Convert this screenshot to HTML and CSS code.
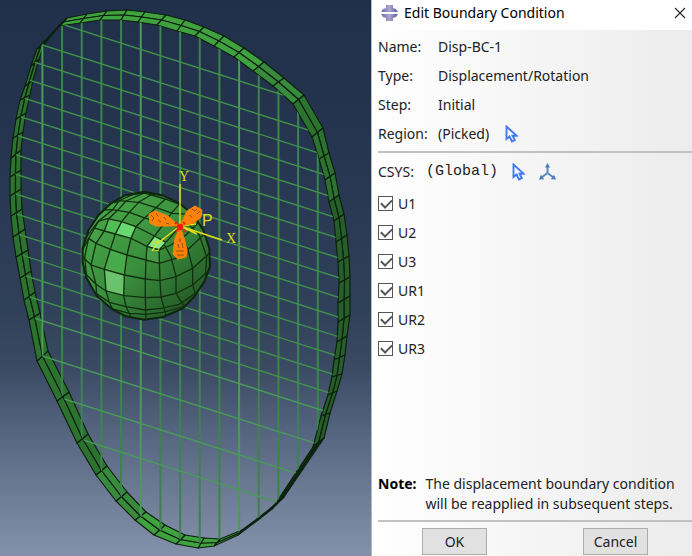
FILE: index.html
```html
<!DOCTYPE html>
<html lang="en">
<head>
<meta charset="utf-8">
<title>Edit Boundary Condition</title>
<link rel="stylesheet" href="styles.css">
</head>
<body>
<main class="workspace">
  <section class="viewport" aria-label="Model viewport">
    <svg class="model" viewBox="0 0 371 556" preserveAspectRatio="xMidYMid slice">
      <defs>
        <linearGradient id="ball" x1="0.2" y1="0.1" x2="0.9" y2="0.85">
          <stop offset="0" stop-color="#46a548"/>
          <stop offset="0.5" stop-color="#3a8e3c"/>
          <stop offset="1" stop-color="#235a26"/>
        </linearGradient>
        <clipPath id="inside"><polygon id="inside-shape"/></clipPath>
      </defs>
      <g id="ring"></g>
      <g id="wires" clip-path="url(#inside)"></g>
      <g transform="translate(76 185) scale(0.3333)">
        <path d="M205 20L262 32L310 55L350 88L382 135L400 190L402 245L385 290L355 335L320 370L262 396L205 404L150 394L110 374L62 332L32 280L20 232L20 190L38 135L68 90L105 55L150 30Z" fill="url(#ball)" stroke="#0d240f" stroke-width="6"/>
        <path d="M137 110L180 125L165 160L118 147Z" fill="#6ad870"/>
        <path d="M95 103L137 110L118 147L85 138Z" fill="#52bd57"/>
        <path d="M238 152L272 174L250 192L213 183Z" fill="#86e88c"/>
        <path d="M213 185L249 195L250 235L210 225Z" fill="#489b4b"/>
        <path d="M85 253L145 270L143 332L90 318Z" fill="#68c36c"/>
        <path d="M103 193L153 210L145 270L85 253Z" fill="#48ab4b"/>
        <g class="mesh">
          <path d="M25 165L52 128L85 138L118 147L165 160L213 184L250 195L285 180L330 150L365 115"/>
          <path d="M20 195L38 160L60 175L103 193L153 210L210 225L250 235L300 220L340 190L382 150"/>
          <path d="M20 215L45 240L85 253L145 270L208 282L252 287L300 275L350 250L400 205"/>
          <path d="M32 270L60 298L90 318L145 332L208 338L255 336L300 325L350 300L393 262"/>
          <path d="M60 325L100 352L150 365L208 375L255 370L310 358L358 325"/>
          <path d="M110 372L160 385L210 388L260 382L325 364"/>
          <path d="M52 128L68 108L95 101L137 110L180 125L230 150L270 172"/>
          <path d="M85 75L110 74L160 82L210 100L262 118L310 125"/>
          <path d="M115 54L130 47L190 52L240 68L290 85L345 88"/>
          <path d="M150 32L205 24L268 42L315 60"/>
          <path d="M32 275L26 215L38 160L68 108L110 74L130 47L180 24"/>
          <path d="M62 330L60 298L45 240L60 175L85 138L98 101L125 76L150 48L205 24"/>
          <path d="M110 372L100 352L90 318L85 253L103 193L118 147L137 110L160 82L190 50L230 27"/>
          <path d="M165 396L150 365L143 332L145 270L153 210L165 160L180 125L210 95L240 68L268 42"/>
          <path d="M210 402L208 338L208 282L210 225L213 184L238 150L262 118L290 80L310 58"/>
          <path d="M270 392L255 336L252 287L249 195L270 172L310 125L345 90"/>
          <path d="M325 365L300 325L300 275L285 215L265 180"/>
          <path d="M358 328L350 298L350 250L335 190L300 145"/>
          <path d="M388 280L392 215L370 150L325 105"/>
        </g>
      </g>
      <g class="axes">
        <path d="M180 226V184M180 226L222 240M180 226L158 243M180 226l17 8M180 226l15-9M180 226l16-2"/>
      </g>
      <g class="support">
        <path d="M179 226L168 216L155 211L149 214L150 223L156 226Z"/>
        <path d="M180 226L187 211L195 206L202 210L201 217L194 223Z"/>
        <path d="M180 227L175 238L173 254L178 259L186 257L187 250L184 238Z"/>
      </g>
      <g class="holes">
        <path d="M151 215l3 3-2 3M156 213l2 3M158 220l3 2M164 217l2 3M166 223l3 1M192 209l3 2 2-2M197 214l3-3M190 215l2 3M176 251h8M177 255h7M178 244l1 4M182 243l1 5M180 238v4"/>
      </g>
      <circle cx="180" cy="227" r="3.3" fill="#f51b13"/>
      <path d="M175 224l2-2M183 222l2 2M176 231l2-1M184 230l2 2" stroke="#f51b13" stroke-width="2"/>
      <path d="M165 238L156 244" class="axes"/>
      <g class="axis-names">
        <text x="179" y="181">Y</text>
        <text x="226" y="243">X</text>
        <text x="151" y="251">Z</text>
        <text class="point-name" x="202" y="226">P</text>
      </g>
    </svg>
  </section>

  <form class="dialog">
    <header class="titlebar">
      <svg class="logo" width="17" height="18" viewBox="0 0 17 18">
        <defs><linearGradient id="metal"><stop offset="0" stop-color="#6f6bab"/><stop offset="0.5" stop-color="#a9a6cf"/><stop offset="1" stop-color="#5d5998"/></linearGradient></defs>
        <path d="M5 1H12V4L15 5L17 8H0L2 5L5 4ZM0 10H17L15 13L12 14V17H5V14L2 13Z" fill="url(#metal)"/>
      </svg>
      <h1>Edit Boundary Condition</h1>
      <button class="close" type="button" aria-label="Close">
        <svg width="12" height="12" viewBox="0 0 12 12"><path d="M1 1L11 11M11 1L1 11" fill="none" stroke="#222" stroke-width="1.1"/></svg>
      </button>
    </header>

    <div class="content">
      <dl class="facts">
        <dt>Name:</dt><dd>Disp-BC-1</dd>
        <dt>Type:</dt><dd>Displacement/Rotation</dd>
        <dt>Step:</dt><dd>Initial</dd>
        <dt>Region:</dt>
        <dd>(Picked)
          <button class="tool" type="button" aria-label="Edit region">
            <svg width="13" height="18" viewBox="0 0 13 18"><path d="M1.5 1.5V14L4.5 11.5L7 16.5L9.8 15L7.6 10.8H11.7Z" fill="#f4f8ff" stroke="#4179f5" stroke-width="1.9"/></svg>
          </button>
        </dd>
      </dl>
      <hr>
      <div class="csys">
        <span>CSYS:</span>
        <span class="system">(Global)</span>
        <button class="tool" type="button" aria-label="Edit coordinate system">
          <svg width="13" height="18" viewBox="0 0 13 18"><path d="M1.5 1.5V14L4.5 11.5L7 16.5L9.8 15L7.6 10.8H11.7Z" fill="#f4f8ff" stroke="#4179f5" stroke-width="1.9"/></svg>
        </button>
        <button class="tool" type="button" aria-label="Create coordinate system">
          <svg width="17" height="18" viewBox="0 0 17 18"><path d="M8.5 3V10L2.5 14.5M8.5 10L14.5 14.5" fill="none" stroke="#5c8cc4" stroke-width="2"/><path d="M8.5 0L11 4.5H6ZM0 16.5L2 11.8L5.2 16.2ZM17 16.5L15 11.8L11.8 16.2Z" fill="#4a7dbb"/></svg>
        </button>
      </div>
      <div class="freedoms">
        <label><input type="checkbox" checked>U1</label>
        <label><input type="checkbox" checked>U2</label>
        <label><input type="checkbox" checked>U3</label>
        <label><input type="checkbox" checked>UR1</label>
        <label><input type="checkbox" checked>UR2</label>
        <label><input type="checkbox" checked>UR3</label>
      </div>
      <div class="note">
        <strong>Note:</strong>
        <p>The displacement boundary condition<br>will be reapplied in subsequent steps.</p>
      </div>
      <hr>
      <footer class="actions">
        <button type="button">OK</button>
        <button type="button">Cancel</button>
      </footer>
    </div>
  </form>
</main>
<script src="model.js"></script>
</body>
</html>
```
FILE: styles.css
```css
* { box-sizing: border-box; }

body {
  margin: 0;
  color: #222;
  font: 14px/20px "Noto Sans", "Open Sans", sans-serif;
}

.workspace {
  display: grid;
  grid-template-columns: minmax(0, 371fr) minmax(0, 321fr);
  min-height: 100vh;
}

.viewport {
  position: relative;
  background: linear-gradient(#20304a 0%, #25354f 25%, #2f4059 55%, #3b4a63 66%, #5b6a84 80%, #8491aa 100%);
}

.model {
  position: absolute;
  width: 100%;
  height: 100%;
}

.model text {
  fill: #dede1c;
  font: 14px "Liberation Serif", serif;
}

.model .point-name { font: 16px "Liberation Sans", sans-serif; }

.mesh { fill: none; stroke: #12300f; stroke-width: 4; }
.axes { fill: none; stroke: #dede1c; stroke-width: 1.5; }
.support { fill: #ff8208; stroke: #ff8208; stroke-linejoin: round; }
.holes { fill: none; stroke: #914f10; stroke-width: 1; }
.ring-cell { stroke: #0c200e; stroke-width: 1.2; stroke-linejoin: round; }
.wire-column { stroke: #3c844c; stroke-width: 2; }
.wire-row { stroke: #3f914b; stroke-width: 1.4; }
.wire-low { stroke: #489b58; }

.dialog {
  display: flex;
  flex-direction: column;
  border-left: 1px solid #b5b8bf;
  background: linear-gradient(90deg, #fff 0%, #f6f6f6 45%, #ececec 100%);
}

.titlebar {
  display: flex;
  align-items: center;
  gap: 6px;
  height: 30px;
  padding: 0 6px 4px 9px;
  background: #fff;
  color: #000;
}

h1 { margin: 0; font-size: 14px; font-weight: 400; }

.close, .tool {
  display: flex;
  padding: 0;
  border: 0;
  background: none;
}

.close { margin-left: auto; }

.content {
  display: flex;
  flex: 1;
  flex-direction: column;
  padding: 2px 0 1px 6px;
}

.facts {
  display: grid;
  grid-template-columns: 60px 1fr;
  grid-auto-rows: 29px;
  align-items: center;
  margin: 0;
}

dd { display: flex; align-items: center; gap: 16px; margin: 0; }

hr {
  width: 100%;
  height: 2px;
  margin: 3px 0 2px;
  border: 0;
  background: #c0c2c2;
}

.csys {
  display: flex;
  align-items: center;
  gap: 14px;
  height: 34px;
}

.system { margin-left: -2px; font: 15px/20px "Liberation Mono", monospace; }

.freedoms { display: grid; grid-auto-rows: 29px; }

.freedoms label { display: flex; align-items: center; gap: 5px; }

input {
  width: 15px;
  height: 15px;
  margin: 0;
  border: 1px solid #555;
  background: #fff;
  appearance: none;
}

input:checked::after {
  display: block;
  width: 9px;
  height: 5px;
  margin: 2px;
  border: solid #555;
  border-width: 0 0 2px 2px;
  transform: rotate(-45deg);
  content: "";
}

.note {
  display: flex;
  gap: 9px;
  margin-top: auto;
  padding-bottom: 3px;
}

strong { color: #000; }
.note p { margin: 0; }

.actions {
  display: flex;
  justify-content: space-between;
  padding: 4px 44px 0 44px;
}

.actions button {
  width: 65px;
  height: 27px;
  padding: 0;
  border: 1px solid #adadad;
  background: #e1e1e1;
  color: #222;
  font: inherit;
}
```
FILE: model.js
```js
// Ring stations, clockwise from the upper left: outer x, outer y, inner x, inner y, cell colour.
const green = { top: '#3fa23f', mid: '#388b3c', side: '#2c732f', dark: '#265f29', thin: '#122e14' };
const stations = [
  [67, 18, 60, 26, 'top'], [87, 14, 80, 23, 'top'], [107, 11, 100, 20, 'top'], [127, 10, 121, 20, 'top'],
  [145, 12, 138, 22, 'top'], [166, 15, 157, 25, 'top'], [185, 20, 177, 31, 'top'], [204, 27, 195, 36, 'top'],
  [224, 36, 214, 46, 'top'], [244, 48, 234, 57, 'top'], [264, 62, 253, 71, 'mid'], [284, 78, 273, 86, 'mid'],
  [304, 95, 293, 104, 'side'], [323, 128, 312, 137, 'side'], [329, 153, 319, 159, 'side'], [335, 173, 325, 180, 'side'],
  [339, 195, 329, 202, 'dark'], [344, 214, 334, 221, 'dark'], [347, 235, 336, 242, 'dark'], [349, 256, 338, 262, 'dark'],
  [350, 277, 339, 283, 'dark'], [350, 296, 338, 303, 'dark'], [350, 315, 338, 322, 'dark'], [347, 336, 337, 342, 'dark'],
  [345, 355, 334, 360, 'dark'], [342, 374, 332, 377, 'dark'], [337, 391, 328, 395, 'dark'], [330, 413, 321, 416, 'dark'],
  [324, 438, 313, 447, 'thin'], [303, 469, 297, 471, 'thin'], [284, 497, 276, 503, 'thin'], [272, 509, 271, 508, 'thin'],
  [258, 520, 257, 519, 'mid'], [238, 535, 242, 530, 'top'], [214, 546, 220, 539, 'top'], [198, 548, 204, 538, 'top'],
  [176, 544, 185, 535, 'top'], [154, 535, 165, 525, 'top'], [135, 520, 146, 512, 'mid'], [116, 501, 127, 492, 'mid'],
  [96, 475, 107, 466, 'side'], [77, 443, 88, 434, 'side'], [57, 401, 69, 392, 'side'], [37, 361, 48, 351, 'side'],
  [29, 320, 40, 313, 'side'], [24, 300, 35, 292, 'side'], [20, 278, 31, 271, 'side'], [16, 257, 28, 250, 'side'],
  [13, 237, 25, 229, 'side'], [11, 216, 22, 209, 'side'], [10, 196, 21, 189, 'side'], [10, 177, 21, 170, 'side'],
  [11, 158, 21, 150, 'side'], [13, 138, 23, 132, 'side'], [16, 119, 26, 113, 'side'], [20, 100, 30, 95, 'side'],
  [25, 86, 33, 80, 'side'], [31, 66, 39, 59, 'side'], [37, 49, 45, 43, 'thin'], [59, 26, 60, 25, 'side']
];

const NS = 'http://www.w3.org/2000/svg';
function draw(parent, tag, attributes) {
  const node = document.createElementNS(NS, tag);
  for (const key in attributes) node.setAttribute(key, attributes[key]);
  parent.appendChild(node);
}

// Each ring cell is split lengthwise into two bands.
const ring = document.getElementById('ring');
const middle = s => [(s[0] + s[2]) / 2, (s[1] + s[3]) / 2];
stations.forEach((a, i) => {
  const b = stations[(i + 1) % stations.length];
  const outer = [[a[0], a[1]], [b[0], b[1]], middle(b), middle(a)];
  const inner = [middle(a), middle(b), [b[2], b[3]], [a[2], a[3]]];
  for (const points of [outer, inner]) {
    draw(ring, 'polygon', { points: points.join(' '), fill: green[a[4]], class: 'ring-cell' });
  }
});

// Wires reach the middle of the ring on the left and its inner edge elsewhere.
const edge = stations.map((s, i) => (i > 34 ? middle(s) : [s[2], s[3]]));
document.getElementById('inside-shape').setAttribute('points', edge.join(' '));

const wires = document.getElementById('wires');
for (let i = 0; i < 15; i++) {
  const x = 42.4 + i * 19.67;
  draw(wires, 'line', { x1: x, x2: x, y1: 0, y2: 556, class: 'wire-column' + (i % 5 ? '' : ' wire-low') });
}
const crossings = [62, 400, 436, 471];
for (let i = 0; i < 15; i++) crossings.push(89 + i * 19.7);
for (const y of crossings) {
  draw(wires, 'line', { x1: 0, x2: 371, y1: y - 57.6, y2: y + 61.1, class: 'wire-row' + (y > 360 ? ' wire-low' : '') });
}
```
